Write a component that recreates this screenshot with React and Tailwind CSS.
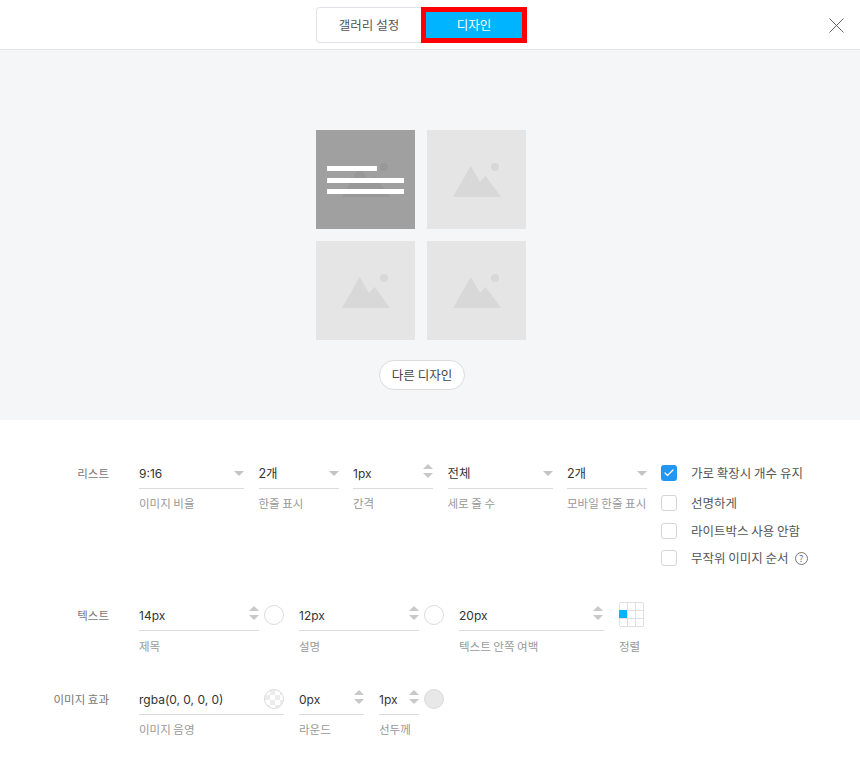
// Gallery design settings panel
import { Check } from 'lucide-react';

const FONT = "font-['Noto_Sans_CJK_KR','Noto_Sans',sans-serif]";

function Placeholder({ dark }) {
  return (
    <svg width="99" height="99" viewBox="0 0 99 99" className="block">
      <rect width="99" height="99" fill={dark ? '#a0a0a0' : '#e5e5e5'} />
      <path d="M26 67 43.7 36 53 52 58.7 46 74 67Z" fill={dark ? '#989898' : '#d8d8d8'} />
      <circle cx="68" cy="37" r="4" fill={dark ? '#989898' : '#d8d8d8'} />
    </svg>
  );
}

function TextCard() {
  return (
    <div className="relative h-[99px] w-[99px]">
      <Placeholder dark />
      <div className="absolute left-[11px] top-[36px] flex w-[77px] flex-col gap-[6.5px]">
        <div className="h-[5px] w-[50px] bg-white" />
        <div className="h-[5px] w-full bg-white" />
        <div className="h-[5px] w-full bg-white" />
      </div>
    </div>
  );
}

function Caret() {
  return (
    <svg width="10" height="5" viewBox="0 0 10 5" className="block shrink-0">
      <path d="M0 0h10L5 5Z" fill="#c4c4c4" />
    </svg>
  );
}

function Spinner() {
  return (
    <svg width="10" height="14" viewBox="0 0 10 14" className="mt-[-4px] block shrink-0">
      <path d="M0 5 5 0 10 5Z" fill="#c8c8c8" />
      <path d="M0 9h10L5 14Z" fill="#c8c8c8" />
    </svg>
  );
}

function Field({ width, value, caption, icon, size = 'text-[12px]', pad = 'pr-0', gap = 'mt-[5px]', children }) {
  return (
    <div className={`shrink-0 ${width}`}>
      <div className={`flex h-[31px] items-center justify-between border-b border-[#dcdcdc] ${pad}`}>
        <span className={`pt-[2px] font-['Inter','Noto_Sans_CJK_KR',sans-serif] leading-none text-[#333] ${size}`}>
          {value}
        </span>
        <span className="flex items-center gap-[5px]">
          {icon === 'caret' ? <Caret /> : icon === 'spin' ? <Spinner /> : null}
          {children}
        </span>
      </div>
      <div className={`${gap} whitespace-nowrap text-[11.5px] leading-[18px] text-[#999]`}>{caption}</div>
    </div>
  );
}

function Swatch({ className }) {
  return <span className={`block h-5 w-5 shrink-0 rounded-full border border-[#dcdcdc] ${className}`} />;
}

function Option({ label, checked, help, className }) {
  return (
    <div className={`flex h-4 items-center ${className}`}>
      {checked ? (
        <span className="flex h-4 w-4 items-center justify-center rounded-[3px] bg-[#2196f3]">
          <Check size={12} color="#fff" strokeWidth={2.5} />
        </span>
      ) : (
        <span className="h-4 w-4 rounded-[3px] border border-[#d5d5d5] bg-white" />
      )}
      <span className="ml-[14px] whitespace-nowrap text-[12.5px] leading-none text-[#555]">{label}</span>
      {help && (
        <span className="ml-[6px] flex h-[13px] w-[13px] items-center justify-center rounded-full border border-[#777] text-[9px] leading-none text-[#666]">
          ?
        </span>
      )}
    </div>
  );
}

function RowLabel({ children }) {
  return (
    <div className="w-[109px] shrink-0 pt-[6px] text-right text-[11.5px] leading-[18px] text-[#777]">{children}</div>
  );
}

export default function App() {
  return (
    <div className={`h-[760px] w-[860px] overflow-hidden bg-white ${FONT}`}>
      {/* Header tabs */}
      <header className="relative flex h-[50px] justify-center border-b border-[#e6e6e6]">
        <div className="ml-[-17px] mt-[7px] flex h-9 w-[211px]">
          <button className="h-9 w-[105px] rounded-l-[4px] border border-r-0 border-[#dfe3e8] text-[12.5px] text-[#555]">
            갤러리 설정
          </button>
          <button className="h-9 w-[106px] border-[5px] border-[#ff0000] bg-[#00b4ff] text-[12.5px] text-white">
            디자인
          </button>
        </div>
        <button className="absolute left-[829px] top-[18px]" aria-label="close">
          <svg width="15" height="15" viewBox="0 0 15 15" className="block">
            <path d="M.5.5l14 14M14.5.5l-14 14" stroke="#666" strokeWidth="1" fill="none" />
          </svg>
        </button>
      </header>

      {/* Preview */}
      <section className="flex h-[370px] flex-col items-center bg-[#f5f6f8] pt-[80px]">
        <div className="ml-[-18px] grid grid-cols-[99px_99px] gap-x-[12px] gap-y-[12px]">
          <TextCard />
          <Placeholder />
          <Placeholder />
          <Placeholder />
        </div>
        <button className="ml-[-16px] mt-5 h-[30px] w-[86px] rounded-full border border-[#dcdcdc] bg-white text-[12.5px] text-[#444]">
          다른 디자인
        </button>
      </section>

      {/* Settings */}
      <section className="pt-[38px]">
        <div className="flex h-[142px] items-start">
          <RowLabel>리스트</RowLabel>
          <div className="ml-[30px] flex gap-[14.5px]">
            <Field width="w-[105px]" value="9:16" caption="이미지 비율" icon="caret" />
            <Field width="w-[80px]" value="2개" size="text-[12.5px]" caption="한줄 표시" icon="caret" />
            <Field width="w-[80px]" value="1px" caption="간격" icon="spin" />
            <Field width="w-[105px]" value="전체" size="text-[12.5px]" caption="세로 줄 수" icon="caret" />
            <Field width="w-[80px]" value="2개" size="text-[12.5px]" caption="모바일 한줄 표시" icon="caret" />
          </div>
          <div className="ml-[14px] flex flex-col pt-[7px]">
            <Option label="가로 확장시 개수 유지" checked />
            <Option label="선명하게" className="mt-[14px]" />
            <Option label="라이트박스 사용 안함" className="mt-3" />
            <Option label="무작위 이미지 순서" help className="mt-[11px]" />
          </div>
        </div>

        <div className="flex h-[84px] items-start">
          <RowLabel>텍스트</RowLabel>
          <div className="ml-[30px] flex">
            <div className="flex w-[160px] items-start">
              <Field width="w-[120px]" value="14px" caption="제목" icon="spin" gap="mt-[6px]" />
              <Swatch className="ml-[5px] mt-[5px]" />
            </div>
            <div className="flex w-[160px] items-start">
              <Field width="w-[120px]" value="12px" caption="설명" icon="spin" gap="mt-[6px]" />
              <Swatch className="ml-[5px] mt-[5px]" />
            </div>
            <Field width="w-[145px]" value="20px" caption="텍스트 안쪽 여백" icon="spin" pad="pr-[1px]" gap="mt-[6px]" />
            <div className="ml-[15px] w-[30px]">
              <div className="mt-[2px] grid h-[25px] w-[25px] grid-cols-3 grid-rows-3 gap-px rounded-[2px] border border-[#e0e0e0] bg-[#e0e0e0]">
                <span className="bg-white" />
                <span className="bg-white" />
                <span className="bg-white" />
                <span className="-ml-px -mt-px bg-[#00b4ff]" />
                <span className="bg-white" />
                <span className="bg-white" />
                <span className="bg-white" />
                <span className="bg-white" />
                <span className="bg-white" />
              </div>
              <div className="mt-[10px] whitespace-nowrap text-[11.5px] leading-[18px] text-[#999]">정렬</div>
            </div>
          </div>
        </div>

        <div className="flex items-start">
          <RowLabel>이미지 효과</RowLabel>
          <div className="ml-[30px] flex items-start">
            <Field width="w-[145px]" value="rgba(0, 0, 0, 0)" caption="이미지 음영">
              <span className="block h-5 w-5 rounded-full border border-[#dcdcdc] bg-[repeating-conic-gradient(#ececec_0_25%,#fff_0_50%)] bg-[length:10px_10px]" />
            </Field>
            <div className="ml-[15px]">
              <Field width="w-[65px]" value="0px" caption="라운드" icon="spin" />
            </div>
            <div className="ml-[15px]">
              <Field width="w-[40px]" value="1px" caption="선두께" icon="spin" />
            </div>
            <Swatch className="ml-[5px] mt-[5px] bg-[#e8e8e8]" />
          </div>
        </div>
      </section>
    </div>
  );
}
